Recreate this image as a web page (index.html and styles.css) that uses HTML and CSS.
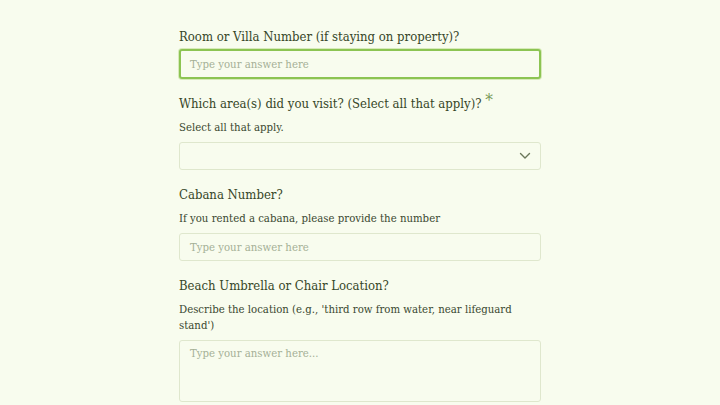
FILE: index.html
```html
<!DOCTYPE html>
<html>
<head>
<meta charset="utf-8">
<link rel="stylesheet" href="styles.css">
</head>
<body>
<form class="form">
  <div class="field first">
    <label class="label">Room or Villa Number (if staying on property)?</label>
    <div class="input focused"><span class="ph">Type your answer here</span></div>
  </div>
  <div class="field">
    <label class="label">Which area(s) did you visit? (Select all that apply)? <span class="req">*</span></label>
    <p class="help">Select all that apply.</p>
    <div class="input select">
      <svg class="chev" width="12" height="8" viewBox="0 0 12 8"><path d="M1.5 1.5 L6 6 L10.5 1.5" fill="none" stroke="#6a7759" stroke-width="1.4" stroke-linecap="round" stroke-linejoin="round"/></svg>
    </div>
  </div>
  <div class="field">
    <label class="label">Cabana Number?</label>
    <p class="help">If you rented a cabana, please provide the number</p>
    <div class="input"><span class="ph">Type your answer here</span></div>
  </div>
  <div class="field">
    <label class="label">Beach Umbrella or Chair Location?</label>
    <p class="help">Describe the location (e.g., 'third row from water, near lifeguard stand')</p>
    <div class="input area"><span class="ph">Type your answer here...</span></div>
  </div>
</form>
</body>
</html>
```
FILE: styles.css
```css
html, body {
  margin: 0;
  padding: 0;
  background: #f8fcee;
}
body {
  font-family: "DejaVu Serif Condensed", "Liberation Serif", serif;
  color: #37452a;
}
.form {
  width: 362px;
  margin: 0 auto;
  padding-top: 28px;
  display: flex;
  flex-direction: column;
  gap: 16px;
}
.field {
  display: flex;
  flex-direction: column;
}
.label {
  font-size: 13px;
  line-height: 18px;
  margin-bottom: 7px;
  color: #364628;
}
.first .label {
  margin-bottom: 3px;
}
.req {
  color: #7a9a5a;
  font-size: 17px;
  line-height: 0;
  vertical-align: 2px;
}
.help {
  margin: 0 0 6px 0;
  font-size: 11.3px;
  line-height: 16px;
  color: #3a4830;
}
.input {
  box-sizing: border-box;
  height: 28px;
  border: 1px solid #dfe7cd;
  border-radius: 3px;
  background: #f8fcee;
  display: flex;
  align-items: center;
  padding: 0 10px;
}
.input.focused {
  height: 30px;
  border: 2px solid #8cc452;
  box-shadow: 0 0 0 1px #d7eab9;
  padding: 0 9px;
}
.ph {
  font-size: 11.3px;
  color: #a5b096;
}
.select {
  justify-content: flex-end;
  padding-right: 9px;
}
.area {
  height: 62px;
  align-items: flex-start;
  padding-top: 6px;
}
```
